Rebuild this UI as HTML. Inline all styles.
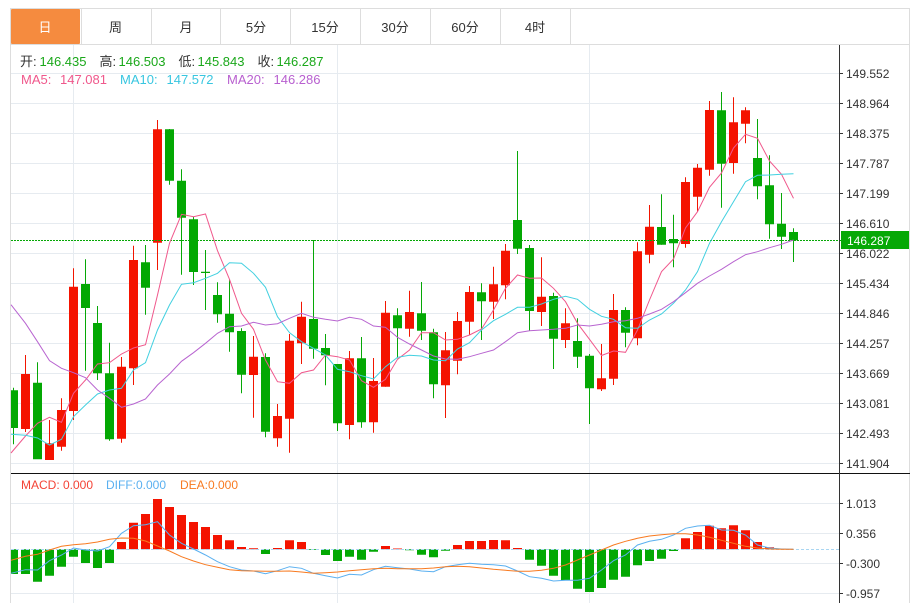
<!DOCTYPE html>
<html lang="zh">
<head>
<meta charset="utf-8">
<title>K线</title>
<style>
html,body{margin:0;padding:0;background:#fff;width:917px;height:603px;overflow:hidden}
svg{display:block}
text{font-family:"Liberation Sans","Noto Sans CJK SC",sans-serif}
.ax text{font-size:12px;fill:#333}
.t text{font-size:13px;fill:#333;text-anchor:middle}
</style>
</head>
<body>
<svg width="917" height="603" viewBox="0 0 917 603" xmlns="http://www.w3.org/2000/svg">
<rect width="917" height="603" fill="#fff"/>
<!-- frame -->
<path d="M10.5 8V603M10 8.5H910M909.5 8V603M10 44.5H910" stroke="#ddd" fill="none"/>
<path d="M81.5 9V44M151.5 9V44M220.5 9V44M290.5 9V44M360.5 9V44M430.5 9V44M500.5 9V44M570.5 9V44" stroke="#ddd" fill="none"/>
<rect x="11" y="9" width="69" height="35" rx="1" fill="#f58b3f"/>
<g class="t">
<text x="45" y="32" style="fill:#fff">日</text>
<text x="115.500" y="32">周</text>
<text x="186" y="32">月</text>
<text x="256" y="32">5分</text>
<text x="325" y="32">15分</text>
<text x="395" y="32">30分</text>
<text x="465" y="32">60分</text>
<text x="535" y="32">4时</text>
</g>
<!-- grid -->
<path d="M11 73.500H839M11 103.500H839M11 133.500H839M11 163.500H839M11 193.500H839M11 223.500H839M11 253.500H839M11 283.500H839M11 313.500H839M11 343.500H839M11 373.500H839M11 403.500H839M11 433.500H839M11 463.500H839M11 503.500H839M11 533.500H839M11 563.500H839M11 593.500H839" stroke="#e6ebf0" fill="none"/>
<path d="M73.500 45V603M337.500 45V603M589.500 45V603" stroke="#e6ebf0" fill="none"/>
<!-- wicks -->
<path stroke="#f21500" fill="none" d="M25.500 355V432M49.500 420V460M61.500 398.300V450.700M73.500 268.300V420M121.500 357V442.700M133.500 245.700V385M157.500 120V270M253.500 336V417.700M277.500 404V446.700M289.500 334V452.700M301.500 301.700V364M349.500 351V439.300M373.500 358V432.700M385.500 301V386.700M409.500 290.700V336.700M445.500 332V418M457.500 312V374.300M469.500 286V335M493.500 266.700V319M505.500 244V299.300M541.500 257.300V326M565.500 308.300V348M601.500 344V391M613.500 294V385M637.500 242.300V345.300M649.500 205V263.300M685.500 177.300V247.700M697.500 164V211.700M709.500 101V175.700M733.500 97.300V173.700M745.500 107.300V143.300"/>
<path stroke="#06a806" fill="none" d="M13.500 387.700V444.300M37.500 362.300V459M85.500 259.300V370.700M97.500 306V380M109.500 342.700V440.700M145.500 245V314.700M169.500 129V184.700M181.500 169.300V274.700M193.500 216.700V285M205.500 250V310M217.500 282.300V322.700M229.500 279.300V351.700M241.500 328.300V393.300M265.500 353.300V437.300M313.500 240V358.700M325.500 334V385.300M337.500 364V431M361.500 337V427.700M397.500 308.300V358.300M421.500 282V340M433.500 328.700V398.300M481.500 283.300V340M517.500 151V254M529.500 245V330.700M553.500 292.700V369M577.500 318.300V368M589.500 354V424M625.500 307.300V347.300M661.500 194.300V244.700M673.500 214.700V267.300M721.500 92V207.700M757.500 119V199.300M769.500 155.300V238.700M781.500 193V249M793.500 228.300V262"/>
<!-- bodies -->
<path fill="#f41300" d="M21 374h9v55h-9zM45 443.300h9v16.700h-9zM57 410h9v36.700h-9zM69 286.700h9v124.300h-9zM117 366.700h9v72h-9zM129 260h9v108.300h-9zM153 129.300h9v113.400h-9zM249 356.700h9v18.300h-9zM273 416h9v22.300h-9zM285 340.700h9v78h-9zM297 316.700h9v26.600h-9zM345 358.300h9v66.700h-9zM369 381h9v41.300h-9zM381 312.700h9v74h-9zM405 312h9v16.700h-9zM441 350.300h9v35h-9zM453 321h9v39.700h-9zM465 292h9v29.700h-9zM489 284.300h9v17.400h-9zM501 250.700h9v34.600h-9zM537 296.700h9v15.300h-9zM561 323.300h9v16.700h-9zM597 378.300h9v11h-9zM609 310h9v68.700h-9zM633 251.300h9v87h-9zM645 226.700h9v28h-9zM681 182h9v62h-9zM693 167.700h9v29h-9zM705 110h9v59.700h-9zM729 122.300h9v40.700h-9zM741 110.300h9v13.400h-9z"/>
<path fill="#03a803" d="M11 390.300h7v37.700h-7zM33 382.700h9v76.600h-9zM81 284h9v24h-9zM93 323h9v50.300h-9zM105 373.300h9v66h-9zM141 262.300h9v25.400h-9zM165 129.300h9v51.400h-9zM177 180.700h9v37h-9zM189 219.300h9v52.700h-9zM201 271.700h9v1.300h-9zM213 295h9v19.300h-9zM225 313.700h9v18.600h-9zM237 331h9v43.700h-9zM261 357h9v74.700h-9zM309 319h9v29.700h-9zM321 348h9v7.300h-9zM333 364h9v59.300h-9zM357 358.300h9v64h-9zM393 315.300h9v13h-9zM417 313.300h9v17.400h-9zM429 332.300h9v52h-9zM477 292.300h9v9h-9zM513 220h9v28.700h-9zM525 248h9v63h-9zM549 296h9v42.700h-9zM573 341h9v15.700h-9zM585 355.700h9v32.600h-9zM621 310h9v22.700h-9zM657 227h9v17.700h-9zM669 239h9v4.300h-9zM717 110.300h9v53.400h-9zM753 158h9v28.300h-9zM765 185.300h9v39h-9zM777 223.700h9v13h-9zM789 232h9v8.300h-9z"/>
<!-- current price line -->
<path d="M11 240.500H842" stroke="#06a806" stroke-dasharray="2 1" fill="none"/>
<!-- MA lines -->
<polyline fill="none" stroke="#f0588c" points="11,453 25.500,436 37.500,423.300 49.500,417.300 61.500,422.300 73.500,393.300 85.500,380 97.500,364 109.500,362.700 121.500,354 133.500,348 145.500,344.700 157.500,295 169.500,243.300 181.500,214.300 193.500,216.700 205.500,214 217.500,250.700 229.500,279.300 241.500,313.300 253.500,329.300 265.500,360 277.500,381.700 289.500,383.300 301.500,372.700 313.500,370 325.500,355 337.500,356.700 349.500,360 361.500,380.700 373.500,387.300 385.500,379.300 397.500,359.300 409.500,350 421.500,332.700 433.500,332.700 445.500,340 457.500,339.300 469.500,335 481.500,329 493.500,310 505.500,288.300 517.500,275 529.500,278.300 541.500,278 553.500,288.300 565.500,301.700 577.500,323.300 589.500,339.300 601.500,355.500 613.500,351 625.500,352.300 637.500,330 649.500,300 661.500,271.700 673.500,259 685.500,228 697.500,211.700 709.500,187.300 721.500,173 733.500,148 745.500,134.300 757.500,138.300 769.500,161 781.500,174.300 793.500,198.300"/>
<polyline fill="none" stroke="#42d0e0" points="11,434.300 25.500,435.300 37.500,438 49.500,445 61.500,439.300 73.500,416.700 85.500,405 97.500,394 109.500,390 121.500,388.300 133.500,370 145.500,362.700 157.500,330 169.500,305 181.500,284.300 193.500,282.700 205.500,278.300 217.500,273.300 229.500,262.700 241.500,263.300 253.500,273.300 265.500,287.300 277.500,316.700 289.500,332.700 301.500,341.700 313.500,348.300 325.500,355 337.500,369.300 349.500,371.700 361.500,375.700 373.500,379 385.500,366.700 397.500,357.300 409.500,355.300 421.500,356 433.500,360 445.500,360.700 457.500,349 469.500,342.700 481.500,330 493.500,320.700 505.500,314.300 517.500,307.300 529.500,307.300 541.500,304 553.500,299.300 565.500,296.300 577.500,299.300 589.500,309.300 601.500,316.300 613.500,319.300 625.500,327.700 637.500,328.300 649.500,320 661.500,314 673.500,303.300 685.500,290 697.500,271.700 709.500,243.300 721.500,221.700 733.500,201.700 745.500,181.700 757.500,175.300 769.500,175 781.500,174.300 793.500,173.700"/>
<polyline fill="none" stroke="#b864d0" points="11,304.700 25.500,323.300 37.500,341.700 49.500,360.700 61.500,368.300 73.500,372.700 85.500,377.700 97.500,390 109.500,398.300 121.500,407.300 133.500,404 145.500,399 157.500,385 169.500,374 181.500,361.300 193.500,352.700 205.500,343.300 217.500,333.300 229.500,326.700 241.500,326 253.500,322.300 265.500,325 277.500,323.700 289.500,318.300 301.500,313.300 313.500,317.300 325.500,319.300 337.500,321 349.500,317.300 361.500,319.300 373.500,326 385.500,327.300 397.500,337.300 409.500,344 421.500,350 433.500,356 445.500,359 457.500,359.300 469.500,356.700 481.500,353.300 493.500,350 505.500,341.700 517.500,332.700 529.500,330.700 541.500,330 553.500,329.300 565.500,328.300 577.500,325 589.500,326 601.500,324.300 613.500,321.700 625.500,320.700 637.500,318.300 649.500,314 661.500,309.300 673.500,301.700 685.500,292.700 697.500,283.300 709.500,276 721.500,269.300 733.500,261.700 745.500,254.700 757.500,251.700 769.500,247.700 781.500,244.300 793.500,240"/>
<!-- legend -->
<g style="font-size:13px">
<text x="20" y="66" fill="#333">开:</text><text x="39.500" y="66" fill="#1aa81a">146.435</text>
<text x="99.500" y="66" fill="#333">高:</text><text x="118.500" y="66" fill="#1aa81a">146.503</text>
<text x="178.500" y="66" fill="#333">低:</text><text x="197.500" y="66" fill="#1aa81a">145.843</text>
<text x="257.500" y="66" fill="#333">收:</text><text x="276.500" y="66" fill="#1aa81a">146.287</text>
<text x="21" y="84" fill="#f0588c">MA5:</text><text x="60" y="84" fill="#f0588c">147.081</text>
<text x="120" y="84" fill="#38c6e0">MA10:</text><text x="166.500" y="84" fill="#38c6e0">147.572</text>
<text x="227" y="84" fill="#b860d0">MA20:</text><text x="273.500" y="84" fill="#b860d0">146.286</text>
</g>
<!-- divider -->
<path d="M11 473.500H910" stroke="#111" fill="none"/>
<!-- MACD bars -->
<path fill="#f41300" d="M117 542h9v7.300h-9zM129 522.700h9v26.600h-9zM141 514h9v35.300h-9zM153 499h9v50.300h-9zM165 507h9v42.300h-9zM177 515h9v34.300h-9zM189 522h9v27.300h-9zM201 527h9v22.300h-9zM213 535h9v14.300h-9zM225 540.300h9v9h-9zM237 547h9v2.300h-9zM249 548.300h9v1h-9zM273 548h9v1.300h-9zM285 540.300h9v9h-9zM297 542h9v7.300h-9zM381 546h9v3.300h-9zM393 548.500h9v.8h-9zM453 545h9v4.300h-9zM465 541h9v8.300h-9zM477 541h9v8.300h-9zM489 540h9v9.300h-9zM501 540.300h9v9h-9zM513 548h9v1.300h-9zM681 538.300h9v11h-9zM693 532h9v17.300h-9zM705 525.700h9v23.600h-9zM717 528.300h9v21h-9zM729 525.300h9v24h-9zM741 530.300h9v19h-9zM753 542h9v7.300h-9zM765 547.300h9v2h-9zM777 548.700h9v.6h-9z"/>
<path fill="#03a803" d="M11 549.300h7v24.700h-7zM21 549.300h9v24.700h-9zM33 549.300h9v32.400h-9zM45 549.300h9v26.400h-9zM57 549.300h9v17.400h-9zM69 549.300h9v7.400h-9zM81 549.300h9v13.700h-9zM93 549.300h9v18.700h-9zM105 549.300h9v13.700h-9zM261 549.300h9v4.700h-9zM309 549.300h9v.7h-9zM321 549.300h9v5.700h-9zM333 549.300h9v11.700h-9zM345 549.300h9v7.400h-9zM357 549.300h9v10.400h-9zM369 549.300h9v2.400h-9zM405 549.300h9v1h-9zM417 549.300h9v5.400h-9zM429 549.300h9v8h-9zM441 549.300h9v1.400h-9zM525 549.300h9v10.400h-9zM537 549.300h9v16.400h-9zM549 549.300h9v26.400h-9zM561 549.300h9v31h-9zM573 549.300h9v39.400h-9zM585 549.300h9v42.700h-9zM597 549.300h9v38.700h-9zM609 549.300h9v30.400h-9zM621 549.300h9v27.400h-9zM633 549.300h9v16h-9zM645 549.300h9v11.700h-9zM657 549.300h9v9.400h-9zM669 549.300h9v1.700h-9z"/>
<path d="M11 549.500H839" stroke="#a9d6f2" stroke-dasharray="3 2" fill="none"/>
<polyline fill="none" stroke="#5ab0f0" points="11,573.300 25.500,569.700 37.500,570 49.500,560.700 61.500,555 73.500,548 85.500,550 97.500,551 109.500,546.700 121.500,533.300 133.500,525.700 145.500,524.700 157.500,521.700 169.500,535 181.500,543.300 193.500,549 205.500,555 217.500,561.700 229.500,566.700 241.500,570 253.500,571 265.500,573.700 277.500,570.700 289.500,566.700 301.500,568.300 313.500,573.300 325.500,575.700 337.500,578 349.500,574.300 361.500,575 373.500,569.700 385.500,566.300 397.500,567.700 409.500,569 421.500,571 433.500,571.700 445.500,566.700 457.500,564.700 469.500,563.300 481.500,564.300 493.500,564.700 505.500,566 517.500,571 529.500,576.700 541.500,578.300 553.500,581 565.500,580.300 577.500,580.300 589.500,578.300 601.500,570 613.500,560.700 625.500,555 637.500,545 649.500,541.300 661.500,539.300 673.500,535 685.500,528.300 697.500,526 709.500,525.300 721.500,530 733.500,530.300 745.500,535 757.500,545 769.500,548 781.500,549 793.500,549.300"/>
<polyline fill="none" stroke="#f87a20" points="11,560.300 25.500,556.300 37.500,554.300 49.500,550 61.500,546.300 73.500,544.700 85.500,543.700 97.500,542 109.500,539.300 121.500,538 133.500,538.300 145.500,541 157.500,546 169.500,551 181.500,556.700 193.500,561 205.500,564.700 217.500,567.300 229.500,569.700 241.500,570.700 253.500,571 265.500,571.300 277.500,571.300 289.500,571 301.500,572 313.500,573.300 325.500,572.700 337.500,572 349.500,570.700 361.500,569.700 373.500,568.700 385.500,568.300 397.500,568.700 409.500,568.700 421.500,568.700 433.500,568 445.500,566.700 457.500,566.300 469.500,566.700 481.500,568 493.500,569.300 505.500,570.300 517.500,571.300 529.500,571.300 541.500,570.300 553.500,568.300 565.500,565 577.500,560 589.500,555 601.500,550 613.500,545 625.500,541.300 637.500,538.300 649.500,536 661.500,534.700 673.500,533.700 685.500,533.700 697.500,535 709.500,537.300 721.500,540.300 733.500,543.300 745.500,546.300 757.500,548 769.500,549 781.500,549.300 793.500,549.300"/>
<g style="font-size:12px">
<text x="21" y="489" fill="#f44336">MACD:</text><text x="63" y="489" fill="#f44336">0.000</text>
<text x="106" y="489" fill="#5ab0f0">DIFF:</text><text x="136" y="489" fill="#5ab0f0">0.000</text>
<text x="180" y="489" fill="#f87a20">DEA:</text><text x="208" y="489" fill="#f87a20">0.000</text>
</g>
<!-- axis -->
<path d="M839.500 45V603" stroke="#333" fill="none"/>
<path d="M840 73.500H843M840 103.500H843M840 133.500H843M840 163.500H843M840 193.500H843M840 223.500H843M840 253.500H843M840 283.500H843M840 313.500H843M840 343.500H843M840 373.500H843M840 403.500H843M840 433.500H843M840 463.500H843M840 503.500H843M840 533.500H843M840 563.500H843M840 593.500H843" stroke="#333" fill="none"/>
<g class="ax">
<text x="846" y="78">149.552</text>
<text x="846" y="108">148.964</text>
<text x="846" y="138">148.375</text>
<text x="846" y="168">147.787</text>
<text x="846" y="198">147.199</text>
<text x="846" y="228">146.610</text>
<text x="846" y="258">146.022</text>
<text x="846" y="288">145.434</text>
<text x="846" y="318">144.846</text>
<text x="846" y="348">144.257</text>
<text x="846" y="378">143.669</text>
<text x="846" y="408">143.081</text>
<text x="846" y="438">142.493</text>
<text x="846" y="468">141.904</text>
<text x="846" y="508">1.013</text>
<text x="846" y="538">0.356</text>
<text x="846" y="568">-0.300</text>
<text x="846" y="598">-0.957</text>
</g>
<rect x="841" y="231" width="68" height="18" fill="#06a806"/>
<text x="847" y="245" style="font-size:12px" fill="#fff">146.287</text>
</svg>
</body>
</html>
